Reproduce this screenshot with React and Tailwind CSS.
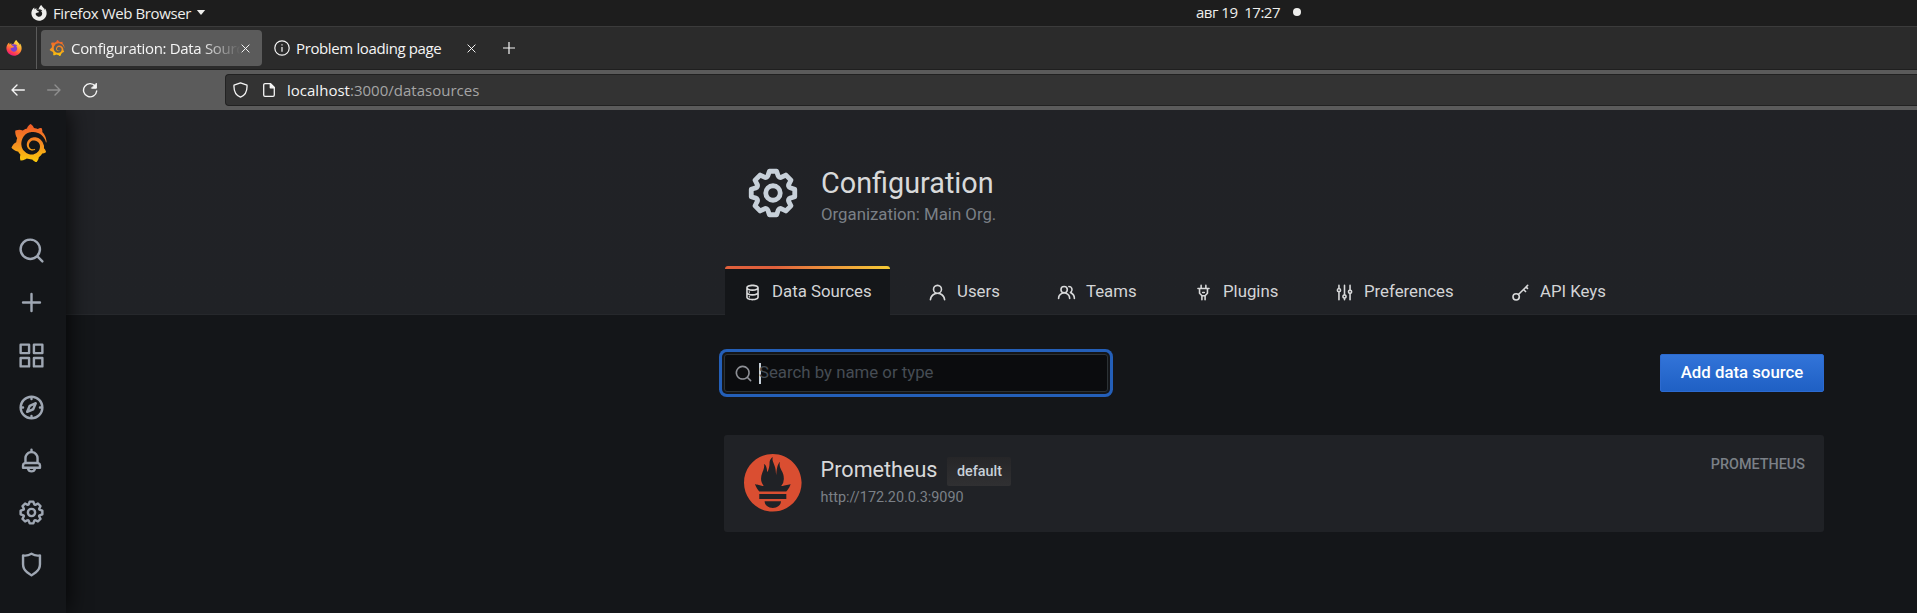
import React from 'react';
import { FaFirefoxBrowser } from 'react-icons/fa';
import { SiGrafana, SiPrometheus } from 'react-icons/si';

const PATHS = {
  search:
    'M21.71,20.29,18,16.61A9,9,0,1,0,16.61,18l3.68,3.68a1,1,0,0,0,1.42,0A1,1,0,0,0,21.71,20.29ZM11,18a7,7,0,1,1,7-7A7,7,0,0,1,11,18Z',
  plus: 'M19,11H13V5a1,1,0,0,0-2,0v6H5a1,1,0,0,0,0,2h6v6a1,1,0,0,0,2,0V13h6a1,1,0,0,0,0-2Z',
  apps:
    'M10,13H3a1,1,0,0,0-1,1v7a1,1,0,0,0,1,1h7a1,1,0,0,0,1-1V14A1,1,0,0,0,10,13ZM9,20H4V15H9ZM21,2H14a1,1,0,0,0-1,1v7a1,1,0,0,0,1,1h7a1,1,0,0,0,1-1V3A1,1,0,0,0,21,2ZM20,9H15V4h5Zm1,4H14a1,1,0,0,0-1,1v7a1,1,0,0,0,1,1h7a1,1,0,0,0,1-1V14A1,1,0,0,0,21,13Zm-1,7H15V15h5ZM10,2H3A1,1,0,0,0,2,3v7a1,1,0,0,0,1,1h7a1,1,0,0,0,1-1V3A1,1,0,0,0,10,2ZM9,9H4V4H9Z',
  compass:
    'M12,2A10,10,0,1,0,22,12,10,10,0,0,0,12,2Zm1,17.93V19a1,1,0,0,0-2,0v.93A8,8,0,0,1,4.07,13H5a1,1,0,0,0,0-2H4.07A8,8,0,0,1,11,4.07V5a1,1,0,0,0,2,0V4.07A8,8,0,0,1,19.93,11H19a1,1,0,0,0,0,2h.93A8,8,0,0,1,13,19.93ZM15.14,7.55l-5,2.12a1,1,0,0,0-.52.52l-2.12,5a1,1,0,0,0,.21,1.1,1,1,0,0,0,.7.3.93.93,0,0,0,.4-.09l5-2.12a1,1,0,0,0,.52-.52l2.12-5a1,1,0,0,0-1.31-1.31Zm-2.49,5.1-2.28,1,1-2.28,2.28-1Z',
  bell:
    'M18,13.18V10a6,6,0,0,0-5-5.91V3a1,1,0,0,0-2,0V4.09A6,6,0,0,0,6,10v3.18A3,3,0,0,0,4,16v2a1,1,0,0,0,1,1H8.14a4,4,0,0,0,7.72,0H19a1,1,0,0,0,1-1V16A3,3,0,0,0,18,13.18ZM8,10a4,4,0,0,1,8,0v3H8Zm4,10a2,2,0,0,1-1.72-1h3.44A2,2,0,0,1,12,20Zm6-3H6V16a1,1,0,0,1,1-1H17a1,1,0,0,1,1,1Z',
  cog:
    'M21.32,9.55l-1.89-.63.89-1.78A1,1,0,0,0,20.13,6L18,3.87a1,1,0,0,0-1.15-.19l-1.78.89-.63-1.89A1,1,0,0,0,13.5,2h-3a1,1,0,0,0-.95.68L8.92,4.57,7.14,3.68A1,1,0,0,0,6,3.87L3.87,6a1,1,0,0,0-.19,1.15l.89,1.78-1.89.63A1,1,0,0,0,2,10.5v3a1,1,0,0,0,.68.95l1.89.63-.89,1.78A1,1,0,0,0,3.87,18L6,20.13a1,1,0,0,0,1.15.19l1.78-.89.63,1.89a1,1,0,0,0,.95.68h3a1,1,0,0,0,.95-.68l.63-1.89,1.78.89A1,1,0,0,0,18,20.13L20.13,18a1,1,0,0,0,.19-1.15l-.89-1.78,1.89-.63A1,1,0,0,0,22,13.5v-3A1,1,0,0,0,21.32,9.55ZM20,12.78l-1.2.4A2,2,0,0,0,17.64,16l.57,1.14-1.1,1.1L16,17.64a2,2,0,0,0-2.79,1.16l-.4,1.2H11.22l-.4-1.2A2,2,0,0,0,8,17.64l-1.14.57-1.1-1.1L6.36,16A2,2,0,0,0,5.2,13.18L4,12.78V11.22l1.2-.4A2,2,0,0,0,6.36,8L5.79,6.89l1.1-1.1L8,6.36A2,2,0,0,0,10.82,5.2l.4-1.2h1.56l.4,1.2A2,2,0,0,0,16,6.36l1.14-.57,1.1,1.1L17.64,8a2,2,0,0,0,1.16,2.79l1.2.4ZM12,8a4,4,0,1,0,4,4A4,4,0,0,0,12,8Zm0,6a2,2,0,1,1,2-2A2,2,0,0,1,12,14Z',
  shield:
    'M19.63,3.65a1,1,0,0,0-.84-.2,8,8,0,0,1-6.22-1.27,1,1,0,0,0-1.14,0A8,8,0,0,1,5.21,3.45a1,1,0,0,0-.84.2A1,1,0,0,0,4,4.43v7.45a9,9,0,0,0,3.77,7.33l3.65,2.6a1,1,0,0,0,1.16,0l3.65-2.6A9,9,0,0,0,20,11.88V4.43A1,1,0,0,0,19.63,3.65ZM18,11.88a7,7,0,0,1-2.93,5.7L12,19.77,8.93,17.58A7,7,0,0,1,6,11.88V5.58a10,10,0,0,0,6-1.39,10,10,0,0,0,6,1.39Z',
  database:
    'M8,16.5a1,1,0,1,0,1,1A1,1,0,0,0,8,16.5ZM12,2C8,2,4,3.37,4,6V18c0,2.63,4,4,8,4s8-1.37,8-4V6C20,3.37,16,2,12,2Zm6,16c0,.71-2.28,2-6,2s-6-1.29-6-2V14.73A13.16,13.16,0,0,0,12,16a13.16,13.16,0,0,0,6-1.27Zm0-6c0,.71-2.28,2-6,2s-6-1.29-6-2V8.73A13.16,13.16,0,0,0,12,10a13.16,13.16,0,0,0,6-1.27ZM12,8C8.28,8,6,6.71,6,6s2.28-2,6-2,6,1.29,6,2S15.72,8,12,8ZM8,10.5a1,1,0,1,0,1,1A1,1,0,0,0,8,10.5Z',
  user:
    'M15.71,12.71a6,6,0,1,0-7.42,0,10,10,0,0,0-6.22,8.18,1,1,0,0,0,2,.22,8,8,0,0,1,15.9,0,1,1,0,0,0,1,.89h.11a1,1,0,0,0,.88-1.1A10,10,0,0,0,15.71,12.71ZM12,12a4,4,0,1,1,4-4A4,4,0,0,1,12,12Z',
  users:
    'M12.3,12.22A4.92,4.92,0,0,0,14,8.5a5,5,0,0,0-10,0,4.92,4.92,0,0,0,1.7,3.72A8,8,0,0,0,1,19.5a1,1,0,0,0,2,0,6,6,0,0,1,12,0,1,1,0,0,0,2,0A8,8,0,0,0,12.3,12.22ZM9,11.5a3,3,0,1,1,3-3A3,3,0,0,1,9,11.5Zm9.74.32A5,5,0,0,0,15,3.5a1,1,0,0,0,0,2,3,3,0,0,1,3,3,3,3,0,0,1-1.5,2.59,1,1,0,0,0-.5.84,1,1,0,0,0,.45.86l.39.26.13.07a7,7,0,0,1,4,6.36,1,1,0,0,0,2,0A9,9,0,0,0,18.74,11.82Z',
  plug:
    'M19,6H16V3a1,1,0,0,0-2,0V6H10V3A1,1,0,0,0,8,3V6H5A1,1,0,0,0,5,8H6v5a1,1,0,0,0,.29.71L9,16.41V21a1,1,0,0,0,2,0V17h2v4a1,1,0,0,0,2,0V16.41l2.71-2.7A1,1,0,0,0,18,13V8h1a1,1,0,0,0,0-2Zm-3,6.59L13.59,15H10.41L8,12.59V8h8ZM11,13h2a1,1,0,0,0,0-2H11a1,1,0,0,0,0,2Z',
  sliders:
    'M20,8.18V3a1,1,0,0,0-2,0V8.18a3,3,0,0,0,0,5.64V21a1,1,0,0,0,2,0V13.82a3,3,0,0,0,0-5.64ZM19,12a1,1,0,1,1,1-1A1,1,0,0,1,19,12Zm-6,2.18V3a1,1,0,0,0-2,0V14.18a3,3,0,0,0,0,5.64V21a1,1,0,0,0,2,0V19.82a3,3,0,0,0,0-5.64ZM12,18a1,1,0,1,1,1-1A1,1,0,0,1,12,18ZM6,6.18V3A1,1,0,0,0,4,3V6.18a3,3,0,0,0,0,5.64V21a1,1,0,0,0,2,0V11.82A3,3,0,0,0,6,6.18ZM5,10A1,1,0,1,1,6,9,1,1,0,0,1,5,10Z',
};

function Icon({ name, className }) {
  if (name === 'key') {
    return (
      <svg viewBox="0 0 24 24" className={className} fill="none" stroke="currentColor" strokeWidth="2" strokeLinecap="round" strokeLinejoin="round">
        <circle cx="6.5" cy="17.5" r="4" />
        <path d="M9.4 14.6 21 3M15.8 8.2l2.6 2.6M19 5l1.8 1.8" />
      </svg>
    );
  }
  return (
    <svg viewBox="0 0 24 24" className={className} fill="currentColor">
      <path d={PATHS[name]} />
    </svg>
  );
}

function SystemBar() {
  return (
    <div className="flex h-[26px] shrink-0 bg-[#1d1d1d] text-[15px] leading-[24px] text-[#eeeeec]">
      <div className="flex h-[25px] w-[1196px] items-center pl-[31px]">
        <FaFirefoxBrowser className="mr-[6px] size-4 shrink-0" />
        <span className="w-[137px] tracking-[-0.39px] whitespace-nowrap">Firefox Web Browser</span>
        <svg viewBox="0 0 10 6" className="ml-[6px] h-[5px] w-[10px]" fill="currentColor">
          <path d="M0 0h10L5 6z" />
        </svg>
      </div>
      <span className="w-[85px] tracking-[-0.5px] whitespace-pre">авг 19  17:27</span>
      <span className="mt-2 ml-[12px] size-2 rounded-full bg-[#eeeeec]" />
    </div>
  );
}

function CloseIcon({ className }) {
  return (
    <svg viewBox="0 0 10 10" className={className} fill="none" stroke="currentColor" strokeWidth="1.1" strokeLinecap="round">
      <path d="M1 1l8 8M9 1l-8 8" />
    </svg>
  );
}

function TabStrip() {
  return (
    <div className="flex h-11 shrink-0 items-center border-t border-b border-t-[#3b3b3b] border-b-[#1f1f1f] bg-[#2b2b2b] text-[15px] text-[#f5f5f5]">
      <div className="flex h-full w-[37px] shrink-0 items-center border-r border-[#5b5b5b] pl-[6px]">
        <svg viewBox="0 0 512 512" className="size-4 overflow-visible">
          <circle cx="256" cy="270" r="150" fill="#7a3fd0" />
          <FaFirefoxBrowser size={512} fill="url(#fox)" />
        </svg>
      </div>
      <div className="ml-1 flex h-9 w-[221px] shrink-0 items-center rounded bg-[#5b5b5b] pl-2">
        <SiGrafana className="size-4 shrink-0" fill="url(#flame)" />
        <span className="ml-[6px] w-[170px] overflow-hidden tracking-[-0.32px] whitespace-nowrap [mask-image:linear-gradient(to_right,#000_76%,transparent_100%)]">
          Configuration: Data Sources
        </span>
        <CloseIcon className="size-[9px] shrink-0" />
      </div>
      <svg viewBox="0 0 16 16" className="ml-3 size-4 shrink-0" fill="none" stroke="currentColor" strokeWidth="1.2">
        <circle cx="8" cy="8" r="7.2" />
        <path d="M8 7v4.800M8 4.200v1.400" />
      </svg>
      <span className="ml-[6px] w-[170px] tracking-[-0.37px] whitespace-nowrap">Problem loading page</span>
      <CloseIcon className="ml-px size-[9px] shrink-0" />
      <svg viewBox="0 0 12 12" className="ml-[27px] size-3" fill="none" stroke="currentColor" strokeWidth="1.2">
        <path d="M6 0v12M0 6h12" />
      </svg>
    </div>
  );
}

function Toolbar() {
  return (
    <div className="flex h-10 shrink-0 items-center bg-[#5b5b5b] text-[#f5f5f5]">
      <svg viewBox="0 0 14 12" className="ml-[11px] h-3 w-[14px]" fill="none" stroke="currentColor" strokeWidth="1.4" strokeLinecap="round" strokeLinejoin="round">
        <path d="M13.3 6H1M6 1L1 6l5 5" />
      </svg>
      <svg viewBox="0 0 14 12" className="ml-[22px] h-3 w-[14px] text-[#8f8f8f]" fill="none" stroke="currentColor" strokeWidth="1.4" strokeLinecap="round" strokeLinejoin="round">
        <path d="M.7 6H13M8 1l5 5-5 5" />
      </svg>
      <svg viewBox="0 0 16 16" className="ml-[21px] size-4" fill="none" stroke="currentColor" strokeWidth="1.4" strokeLinecap="round" strokeLinejoin="round">
        <path d="M13.2 4A6.6 6.6 0 1 0 14.7 9" />
        <path d="M14.4 1.6v4.6H9.8z" fill="currentColor" strokeWidth="1" />
      </svg>
      <div className="ml-[127px] flex h-8 grow items-center rounded-l border border-r-0 border-[#222] bg-[#333] pl-[7px]">
        <svg viewBox="0 0 15 16" className="h-4 w-[15px]" fill="none" stroke="currentColor" strokeWidth="1.3" strokeLinejoin="round">
          <path d="M7.5.8 14 3.2c.3 5-1.3 10-6.5 12C2.3 13.2.7 8.2 1 3.2z" />
        </svg>
        <svg viewBox="0 0 12 14" className="ml-[15px] h-[14px] w-3" fill="none" stroke="currentColor" strokeWidth="1.3" strokeLinejoin="round">
          <path d="M2 .7h5.5L11.3 4.5V12a1.300 1.300 0 0 1-1.300 1.300H2A1.300 1.300 0 0 1 .7 12V2A1.300 1.300 0 0 1 2 .7z" />
          <path d="M7.3.8v4h4z" fill="currentColor" />
        </svg>
        <span className="ml-[12px] text-[15px] tracking-[0.01px] text-[#a5a5a5]">
          <span className="text-[#f5f5f5]">localhost</span>:3000/datasources
        </span>
      </div>
    </div>
  );
}

const NAV = ['search', 'plus', 'apps', 'compass', 'bell', 'cog', 'shield'];

function SideMenu() {
  return (
    <nav className="z-10 flex w-[66px] shrink-0 flex-col bg-[#141619] pl-[10px] text-[#9fa7b3] shadow-[0_0_24px_rgba(0,0,0,0.9)]">
      <SiGrafana className="mt-[14px] size-[38px]" fill="url(#flame)" />
      <div className="mt-[74px] flex flex-col gap-[23.4px] pl-[7px]">
        {NAV.map((name) => (
          <Icon key={name} name={name} className="size-[29px]" />
        ))}
      </div>
    </nav>
  );
}

const TABS = [
  { icon: 'database', label: 'Data Sources', width: 'w-[99px]' },
  { icon: 'user', label: 'Users', width: 'w-[43px]' },
  { icon: 'users', label: 'Teams', width: 'w-[51px]' },
  { icon: 'plug', label: 'Plugins', width: 'w-[55px]' },
  { icon: 'sliders', label: 'Preferences', width: 'w-[90px]' },
  { icon: 'key', label: 'API Keys', width: 'w-[67px]' },
];

function PageHeader() {
  return (
    <header className="flex h-[205px] shrink-0 flex-col border-b border-[#26282c] bg-linear-to-b from-[#212226] to-[#202226] pl-[659px]">
      <div className="flex pt-[54px] pl-[19px]">
        <Icon name="cog" className="size-[58px] text-[#c7d0d9]" />
        <div className="ml-[19px] flex flex-col pt-[1px]">
          <h1 className="text-[28.8px] leading-[36px] text-[#d8d9da]">Configuration</h1>
          <div className="mt-[2px] text-[16.8px] leading-[22px] text-[#7b8087]">Organization: Main Org.</div>
        </div>
      </div>
      <div className="mt-auto -mb-px flex gap-5">
        {TABS.map((tab, i) => (
          <div
            key={tab.label}
            className={
              i === 0
                ? 'flex h-[49px] flex-col overflow-hidden rounded-t-[3px] bg-[#141619]'
                : 'flex h-[49px] flex-col'
            }
          >
            <div className={i === 0 ? 'h-[3px] bg-linear-to-r from-[#e0603c] from-30% to-[#f5cb35]' : 'h-[3px]'} />
            <div className="flex h-[46px] items-center pr-[19px] pl-[18px]">
              <Icon name={tab.icon} className="size-[19px] text-[#d8d9da]" />
              <span className={`ml-[10px] text-[16.8px] whitespace-nowrap text-[#d3d4d6] ${tab.width}`}>{tab.label}</span>
            </div>
          </div>
        ))}
      </div>
    </header>
  );
}

function DataSources() {
  return (
    <main className="flex grow flex-col pt-[39px] pl-[658px]">
      <div className="flex w-[1100px] items-center justify-between">
        <div className="flex h-[38px] w-[384px] items-center rounded-[3px] border border-[#2c3235] bg-[#0b0c0e] pl-[9px] shadow-[0_0_0_2px_#141619,0_0_0_5px_#245fb8]">
          <Icon name="search" className="size-[19px] text-[#8e9096]" />
          <span className="ml-[6px] h-[21px] w-[2px] bg-[#c7d0d9]" />
          <span className="-ml-[2px] text-[16.8px] text-[#464c54]">Search by name or type</span>
        </div>
        <button className="h-[38px] w-[164px] rounded-[2px] border border-[#2c6ad0] bg-linear-to-b from-[#3274d9] to-[#1f60c4] text-[16.8px] font-medium whitespace-nowrap text-white">
          Add data source
        </button>
      </div>
      <div className="mt-[43px] flex h-[97px] w-[1100px] items-start rounded-[3px] bg-[#202226] pt-[19px] pr-[19px] pl-5">
        <SiPrometheus className="size-[57.6px] text-[#da4e31]" />
        <div className="ml-[19px] flex flex-col">
          <div className="flex h-[33px] items-center">
            <span className="text-[21.6px] text-[#d8d9da]">Prometheus</span>
            <span className="mt-[2px] ml-[10px] flex h-[29px] w-16 items-center justify-center rounded-[2px] bg-linear-to-b from-[#262628] to-[#303032] text-[14.4px] font-medium text-[#c7d0d9]">
              default
            </span>
          </div>
          <span className="text-[14.4px] leading-[22px] text-[#7b8087]">http://172.20.0.3:9090</span>
        </div>
        <span className="mt-px ml-auto text-[14.4px] leading-[20px] font-medium text-[#7b8087]">PROMETHEUS</span>
      </div>
    </main>
  );
}

export default function App() {
  return (
    <div className="flex h-[613px] w-[1917px] flex-col overflow-hidden bg-[#141619] font-['Open_Sans','Noto_Sans',sans-serif]">
      <svg className="absolute size-0">
        <defs>
          <linearGradient id="flame" x1="0" y1="0" x2="0" y2="1">
            <stop offset="0" stopColor="#f05a28" />
            <stop offset="0.5" stopColor="#f58a22" />
            <stop offset="1" stopColor="#fbca0a" />
          </linearGradient>
          <linearGradient id="fox" x1="0.8" y1="0" x2="0.3" y2="1">
            <stop offset="0" stopColor="#fff44f" />
            <stop offset="0.45" stopColor="#ff9a30" />
            <stop offset="0.8" stopColor="#ff3a50" />
            <stop offset="1" stopColor="#e31587" />
          </linearGradient>
        </defs>
      </svg>
      <SystemBar />
      <TabStrip />
      <Toolbar />
      <div className="flex grow overflow-hidden font-[Roboto,sans-serif]">
        <SideMenu />
        <div className="flex grow flex-col">
          <PageHeader />
          <DataSources />
        </div>
      </div>
    </div>
  );
}
